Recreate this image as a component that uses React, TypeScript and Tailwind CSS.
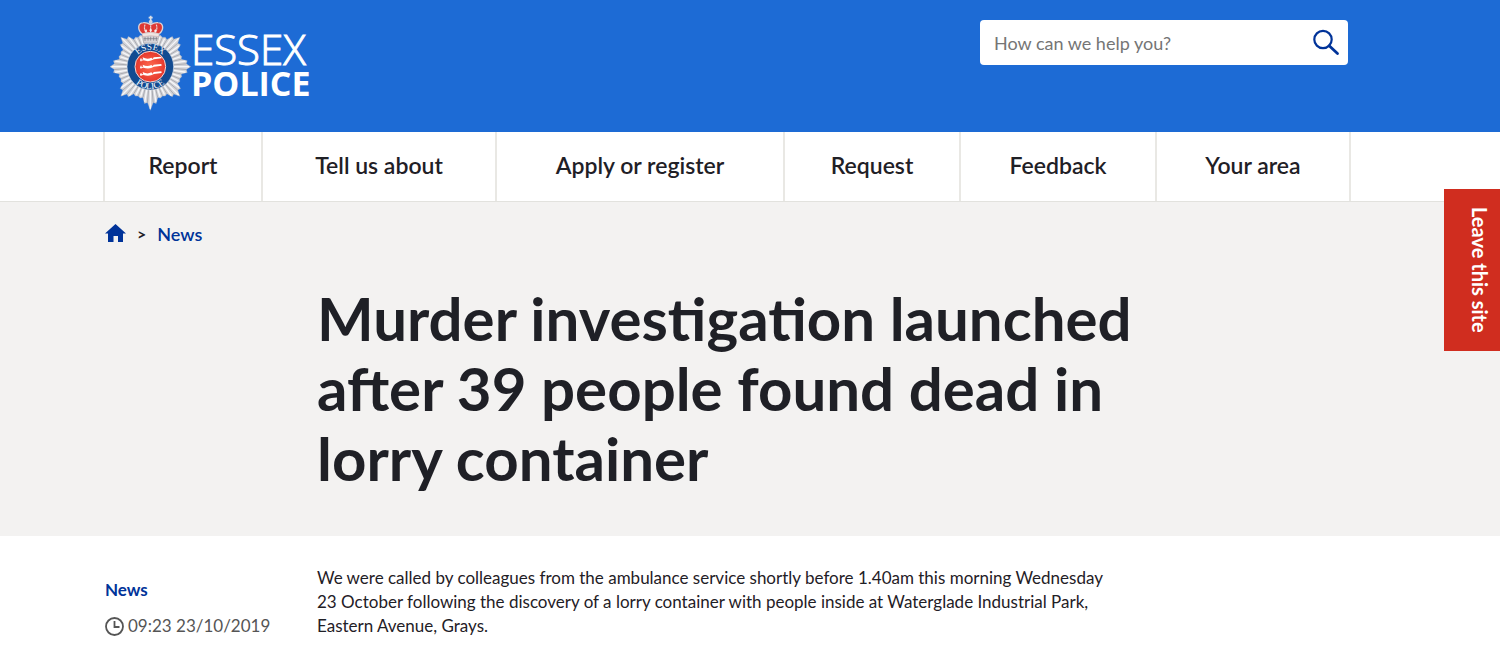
const navItems = ['Report', 'Tell us about', 'Apply or register', 'Request', 'Feedback', 'Your area'];

const rayLengths = [125, 112, 99, 99, 112];

function polar(radius: number, degrees: number) {
  const a = degrees * (Math.PI / 180);
  return [136 + radius * Math.cos(a), 170 + radius * Math.sin(a)];
}

// Forty fluted rays, five for each of the eight main points
const rays = Array.from({ length: 40 }, (_, i) => {
  const angle = i * 9 - 90;
  // the vertical points are the longest, the horizontal ones the shortest
  const extra = i % 20 === 0 ? 6 : i % 20 === 10 ? -4 : 0;
  const tip = rayLengths[i % 5] + extra;
  const valley = Math.min(rayLengths[i % 5], rayLengths[(i + 1) % 5]) - 4;
  return { angle, tip, valley };
});

const starPoints = rays
  .map((r) => `${polar(r.tip, r.angle).join(',')} ${polar(r.valley, r.angle + 4.5).join(',')}`)
  .join(' ');

function Crest() {
  return (
    <svg viewBox="0 0 270 306" className="w-[90px] h-[102px] shrink-0" aria-hidden="true">
      <defs>
        <radialGradient id="redFill">
          <stop offset="0" stopColor="#ff6a50" />
          <stop offset="1" stopColor="#e5372c" />
        </radialGradient>
        <path id="topArc" d="M85 170a51 51 0 0 1 102 0" />
        <path id="bottomArc" d="M69 170a67 67 0 0 0 134 0" />
      </defs>

      {/* Star */}
      <polygon points={starPoints} fill="#d3d4d9" stroke="#b4b6bf" strokeWidth="1" />
      {rays.map((r) => {
        const [x1, y1] = polar(68, r.angle);
        const [x2, y2] = polar(r.tip - 5, r.angle);
        const [x3, y3] = polar(68, r.angle + 4.5);
        const [x4, y4] = polar(r.valley, r.angle + 4.5);
        return (
          <g key={r.angle}>
            <line x1={x1} y1={y1} x2={x2} y2={y2} stroke="#f6f6f8" strokeWidth="4" />
            <line x1={x3} y1={y3} x2={x4} y2={y4} stroke="#94959d" strokeWidth="2" />
          </g>
        );
      })}

      {/* Crown */}
      <path d="M116 99l-3-26h48l-3 26z" fill="#d5d3d8" stroke="#888" strokeWidth="1" />
      <path d="M112 72c-15-11-15-33 3-34 9-1 17 3 22 6 5-3 13-7 22-6 18 1 18 23 3 34q-25-7-50 0z" fill="#df3934" stroke="#dcd4d8" strokeWidth="4" />
      <path d="M137 42v24M120 44q-4 12 2 22M154 44q4 12-2 22" fill="none" stroke="#ead8d4" strokeWidth="3.5" strokeDasharray="4 1" />
      <path d="M111 71q26-8 52 0l-2 9q-24-6-48 0z" fill="#eee6e3" stroke="#b88" strokeWidth="1" />
      <path d="M119 63l4-6 4 6-4 5zM147 63l4-6 4 6-4 5zM133 61l4-7 4 7-4 6z" fill="#f6eeee" />
      <circle cx="137" cy="36" r="6" fill="#cfd4de" />
      <path d="M137 17v16M131 23h12" stroke="#d8dde6" strokeWidth="5" />
      <path d="M116 86h42M120 81v12M129 80v12M137 80v12M146 80v12M154 81v12" stroke="#74767f" strokeWidth="2" />

      {/* Badge */}
      <circle cx="136" cy="170" r="70" fill="#124b91" stroke="#d6dce5" strokeWidth="2" />
      <circle cx="136" cy="170" r="46" fill="url(#redFill)" stroke="#f1d7d5" strokeWidth="3" />
      <g fill="#fff" fontFamily="'Liberation Serif', serif" fontSize="27" textAnchor="middle">
        <text>
          <textPath href="#topArc" startOffset="50%">ESSEX</textPath>
        </text>
        <text>
          <textPath href="#bottomArc" startOffset="50%">POLICE</textPath>
        </text>
      </g>
      {[148, 170, 192].map((y) => (
        <g key={y} transform={`translate(137 ${y})`}>
          <path d="M-24-6q14 8 26 1l4 4 3-5 23-2 1 5-23 3q-14 9-32 3z" fill="#fff" />
          <path d="M-29-3v9M-32 2h10" stroke="#fff" strokeWidth="3" />
        </g>
      ))}
    </svg>
  );
}

export default function App() {
  return (
    <div className="min-h-screen bg-white font-[Lato,sans-serif] text-[#1f2026]">
      <header>
        <div className="bg-[#1d6bd5] h-[132px] pl-[105px] pr-[152px] flex items-start justify-between">
          <a href="#" className="flex pt-[10px] text-white font-['Open_Sans',sans-serif]" aria-label="Essex Police">
            <Crest />
            <span className="flex flex-col pt-[19px] -ml-1">
              <span className="text-[42px] leading-10 font-light [-webkit-text-stroke:1px_white]">ESSEX</span>
              <span className="text-[34px] leading-7 font-bold">POLICE</span>
            </span>
          </a>

          <form role="search" className="mt-5 flex items-center w-[368px] h-[45px] bg-white rounded" onSubmit={(e) => e.preventDefault()}>
            <input
              type="search"
              aria-label="Search"
              placeholder="How can we help you?"
              className="min-w-0 grow h-full pl-[14px] text-lg bg-transparent outline-none placeholder:text-[#757575]"
            />
            <button type="submit" aria-label="Submit search" className="px-2 text-[#003399]">
              <svg viewBox="0 0 28 28" className="w-7 h-7" fill="none" stroke="currentColor">
                <circle cx="11" cy="10.5" r="8.7" strokeWidth="2.2" />
                <path d="M17.2 16.7L25.5 24.5" strokeWidth="2.8" strokeLinecap="round" />
              </svg>
            </button>
          </form>
        </div>

        <nav aria-label="Main" className="h-[70px] pl-[103px] pr-[149px] border-b border-[#e2e2de]">
          <ul className="h-full grid grid-cols-[158fr_234fr_288fr_176fr_196fr_194fr] border-l-2 border-[#e9e8e4]">
            {navItems.map((item) => (
              <li key={item} className="border-r-2 border-[#e9e8e4]">
                <a href="#" className="h-full flex items-center justify-center pb-1 text-[23px] leading-7 font-semibold whitespace-nowrap">
                  {item}
                </a>
              </li>
            ))}
          </ul>
        </nav>
      </header>

      <button
        type="button"
        className="fixed right-0 top-[189px] w-[56px] h-[162px] pl-4 flex items-center justify-center bg-[#d02d1f] text-white text-xl font-bold [writing-mode:vertical-rl]"
      >
        Leave this site
      </button>

      <main>
        <div className="bg-[#f3f2f1] pl-[105px] pr-[150px] pt-5 pb-[43px]">
          <nav aria-label="Breadcrumb" className="flex items-center text-lg leading-6 font-semibold">
            <a href="#" aria-label="Home" className="text-[#003399]">
              <svg viewBox="0 0 21 20" className="w-[21px] h-5" fill="currentColor">
                <path d="M10.5 0L21 9.5h-3V18h-5v-6H8.500v6H3V9.500H0z" />
              </svg>
            </a>
            <span className="mx-[11px] text-base font-bold">&gt;</span>
            <a href="#" className="text-[#003399]">News</a>
          </nav>

          <h1 className="ml-[212px] mt-[37px] max-w-[830px] text-[60px] leading-[70px] font-bold">
            Murder investigation launched after 39 people found dead in lorry container
          </h1>
        </div>

        <div className="pl-[105px] pr-[150px] pt-[30px] flex items-start">
          <div className="w-[212px] shrink-0 pt-3 text-[17px]">
            <a href="#" className="block leading-6 font-bold text-[#003399]">News</a>
            <p className="mt-3 flex items-center gap-1 leading-6 text-[#555]">
              <svg viewBox="0 0 19 19" className="w-[19px] h-[19px]" fill="none" stroke="currentColor" strokeWidth="1.8">
                <circle cx="9.5" cy="9.5" r="8.5" />
                <path d="M9.500 4v6h5" />
              </svg>
              09:23 23/10/2019
            </p>
          </div>
          <p className="max-w-[800px] text-[17px] leading-6">
            We were called by colleagues from the ambulance service shortly before 1.40am this morning Wednesday 23
            October following the discovery of a lorry container with people inside at Waterglade Industrial Park,
            Eastern Avenue, Grays.
          </p>
        </div>
      </main>
    </div>
  );
}
